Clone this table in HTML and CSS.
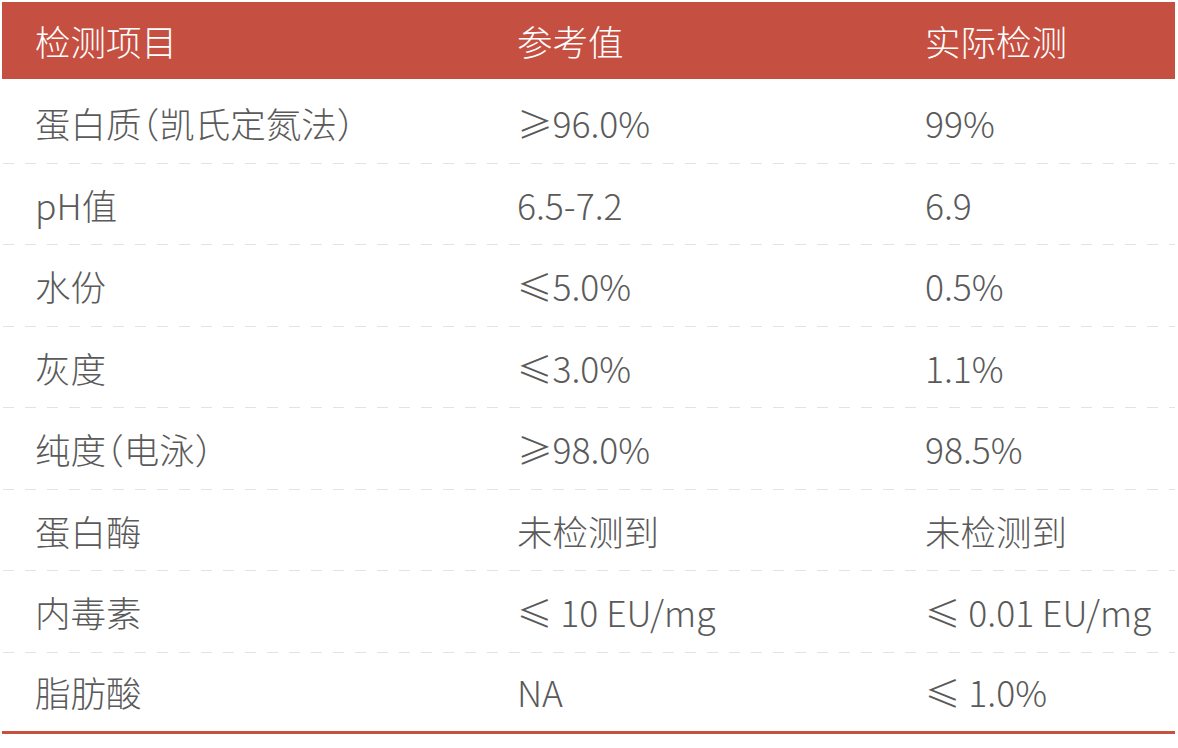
FILE: index.html
```html
<!DOCTYPE html>
<html lang="zh">
<head>
<meta charset="utf-8">
<link rel="stylesheet" href="styles.css">
</head>
<body>
<div class="sheet">
  <div class="row head">
    <div class="cell">检测项目</div>
    <div class="cell">参考值</div>
    <div class="cell">实际检测</div>
  </div>
  <div class="rows">
    <div class="row"><div class="cell name">蛋白质（凯氏定氮法）</div><div class="cell">≥96.0%</div><div class="cell">99%</div></div>
    <div class="row"><div class="cell name">pH值</div><div class="cell">6.5-7.2</div><div class="cell">6.9</div></div>
    <div class="row"><div class="cell name">水份</div><div class="cell">≤5.0%</div><div class="cell">0.5%</div></div>
    <div class="row"><div class="cell name">灰度</div><div class="cell">≤3.0%</div><div class="cell">1.1%</div></div>
    <div class="row"><div class="cell name">纯度（电泳）</div><div class="cell">≥98.0%</div><div class="cell">98.5%</div></div>
    <div class="row"><div class="cell name">蛋白酶</div><div class="cell">未检测到</div><div class="cell">未检测到</div></div>
    <div class="row"><div class="cell name">内毒素</div><div class="cell">≤ 10 EU/mg</div><div class="cell">≤ 0.01 EU/mg</div></div>
    <div class="row last"><div class="cell name">脂肪酸</div><div class="cell">NA</div><div class="cell">≤ 1.0%</div></div>
  </div>
</div>
</body>
</html>
```
FILE: styles.css
```css
html, body {
  margin: 0;
  padding: 0;
  background: #ffffff;
}
body {
  font-family: "Noto Sans CJK SC", "Noto Sans", sans-serif;
  font-weight: 300;
  font-size: 35.5px;
  color: #5a5a5a;
}
.sheet {
  padding: 2px 3px 0 2px;
}
.row {
  display: grid;
  grid-template-columns: 482px 408px 1fr;
  align-items: center;
  height: 81.5px;
  box-sizing: border-box;
  background-image: linear-gradient(to right, #e3e3e3 11px, transparent 11px);
  background-size: 22px 1px;
  background-repeat: repeat-x;
  background-position: 1px 100%;
}
.row .cell {
  padding-left: 33px;
  white-space: nowrap;
}
.row .name {
  font-feature-settings: "halt";
}
.head {
  height: 77px;
  background: #c55042;
  color: #ffffff;
}
.rows {
  padding-top: 3px;
}
.row.last {
  background: none;
  border-bottom: 3px solid #c9503f;
}
```
